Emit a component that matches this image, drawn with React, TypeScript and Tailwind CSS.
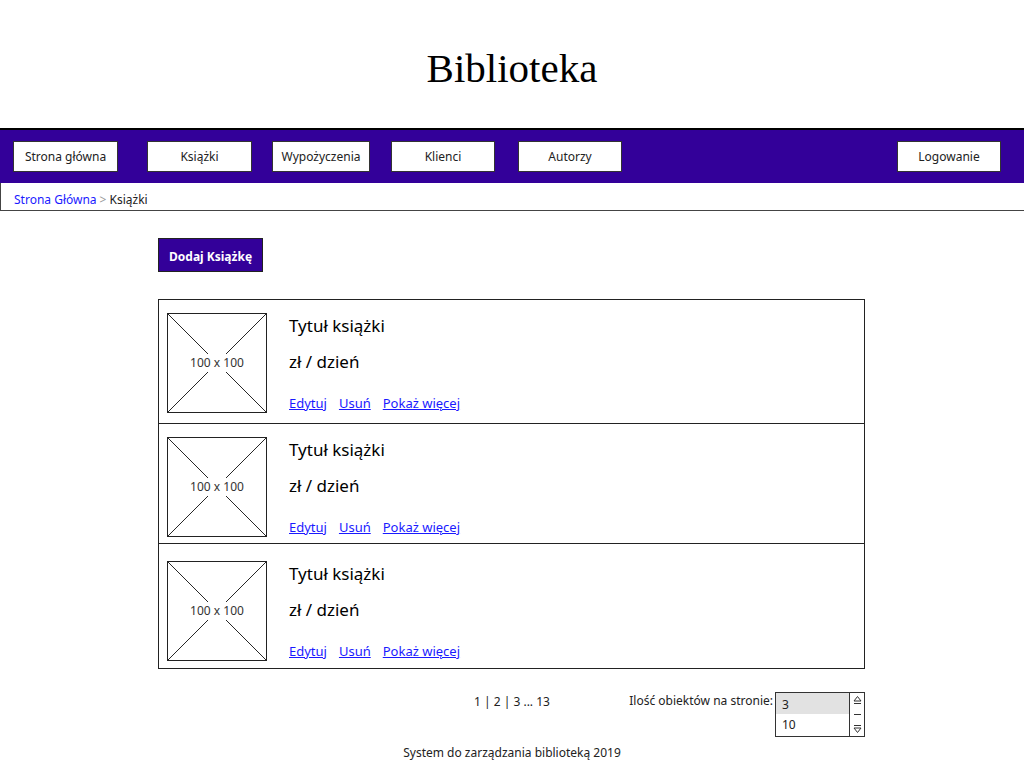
const font = "font-['Comic_Sans_MS','Noto_Sans',sans-serif]";

const navItems = [
  { label: 'Strona główna', w: 'w-[105px]', ml: 'ml-0' },
  { label: 'Książki', w: 'w-[105px]', ml: 'ml-[29px]' },
  { label: 'Wypożyczenia', w: 'w-[98px]', ml: 'ml-[20px]' },
  { label: 'Klienci', w: 'w-[104px]', ml: 'ml-[21px]' },
  { label: 'Autorzy', w: 'w-[104px]', ml: 'ml-[23px]' },
];

const books = [
  { h: 'h-[124px]', pt: 'pt-[13px]' },
  { h: 'h-[120px]', pt: 'pt-[13px]' },
  { h: 'h-[124px]', pt: 'pt-[17px]' },
];

const Placeholder = () => (
  <div className="relative w-[100px] h-[100px] border border-[#222] shrink-0">
    <svg className="absolute inset-0" width="100%" height="100%" viewBox="0 0 100 100" preserveAspectRatio="none">
      <line x1="0" y1="0" x2="100" y2="100" stroke="#222" strokeWidth="1" />
      <line x1="100" y1="0" x2="0" y2="100" stroke="#222" strokeWidth="1" />
    </svg>
    <div className="absolute inset-0 flex items-center justify-center">
      <span className="bg-white px-[1px] text-[12px] text-[#333] font-['Noto_Sans',sans-serif]">100 x 100</span>
    </div>
  </div>
);

const BookCard = ({ h, pt }: { h: string; pt: string }) => (
  <div className={`${h} ${pt} flex border-b border-[#222] last:border-b-0 pl-[8px]`}>
    <Placeholder />
    <div className="flex flex-col ml-[22px]">
      <p className="text-[17px] text-black leading-[24px] mt-[1px]">Tytuł książki</p>
      <p className="text-[17px] text-black leading-[24px] mt-[12px]">zł / dzień</p>
      <div className="flex gap-[12px] mt-[20px] text-[13px] text-[#1a1aff] leading-[18px]">
        <a href="#" className="underline">Edytuj</a>
        <a href="#" className="underline">Usuń</a>
        <a href="#" className="underline">Pokaż więcej</a>
      </div>
    </div>
  </div>
);

export default function App() {
  return (
    <div className={`w-[1024px] h-[768px] bg-white flex flex-col ${font}`}>
      <header className="h-[128px] flex justify-center pt-[44px]">
        <h1 className="text-[41px] leading-[48px] text-black font-['Liberation_Serif',serif]">Biblioteka</h1>
      </header>

      <nav className="h-[55px] bg-[#330099] border-t-2 border-black flex items-center pl-[13px] pr-[23px]">
        {navItems.map((item) => (
          <button
            key={item.label}
            type="button"
            className={`${item.w} ${item.ml} h-[31px] bg-white border border-[#333] text-[12px] text-[#222]`}
          >
            {item.label}
          </button>
        ))}
        <button type="button" className="ml-auto w-[104px] h-[31px] bg-white border border-[#333] text-[12px] text-[#222]">
          Logowanie
        </button>
      </nav>

      <div className="h-[28px] border-b border-l border-[#444] flex items-center pl-[13px] text-[12px] pt-[7px]">
        <a href="#" className="text-[#1a1aff]">Strona Główna</a>
        <span className="text-[#999] mx-[3px]">&gt;</span>
        <span className="text-[#222]">Książki</span>
      </div>

      <main className="w-[707px] ml-[158px] flex flex-col">
        <button
          type="button"
          className="mt-[27px] w-[105px] h-[34px] pt-[3px] bg-[#330099] border border-[#222] text-white text-[12px] font-bold"
        >
          Dodaj Książkę
        </button>

        <div className="mt-[27px] border border-[#222] flex flex-col">
          {books.map((b, i) => (
            <BookCard key={i} h={b.h} pt={b.pt} />
          ))}
        </div>

        <div className="mt-[23px] flex items-start text-[12px] text-[#222]">
          <span className="ml-[316px] mt-[1px] whitespace-nowrap shrink-0">1 | 2 | 3 ... 13</span>
          <span className="ml-auto whitespace-nowrap shrink-0">Ilość obiektów na stronie:</span>
          <div className="ml-[2px] shrink-0 w-[90px] h-[45px] border border-[#333] flex text-[12px]">
            <div className="flex-1 flex flex-col">
              <div className="h-[21px] bg-[#e2e2e2] pl-[6px] flex items-end">3</div>
              <div className="h-[22px] pl-[6px] flex items-center">10</div>
            </div>
            <div className="w-[15px] border-l border-[#333] flex flex-col items-center justify-between py-[1px]">
              <svg width="11" height="11" viewBox="0 0 11 11">
                <path d="M2 7 L5.5 2.5 L9 7 Z" fill="none" stroke="#333" />
                <line x1="2" y1="9.5" x2="9" y2="9.5" stroke="#333" />
              </svg>
              <svg width="11" height="3" viewBox="0 0 11 3">
                <line x1="2" y1="1.5" x2="9" y2="1.5" stroke="#333" />
              </svg>
              <svg width="11" height="11" viewBox="0 0 11 11">
                <line x1="2" y1="1.5" x2="9" y2="1.5" stroke="#333" />
                <path d="M2 4 L5.5 8.5 L9 4 Z" fill="none" stroke="#333" />
              </svg>
            </div>
          </div>
        </div>
      </main>

      <footer className="mt-[7px] flex justify-center text-[12px] text-[#222]">
        System do zarządzania biblioteką 2019
      </footer>
    </div>
  );
}
